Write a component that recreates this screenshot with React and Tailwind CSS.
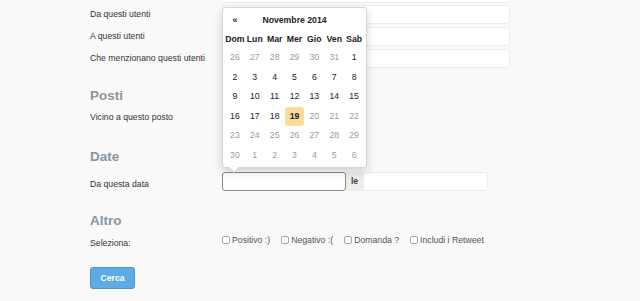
import React from "react";

const weeks = [
  [26, 27, 28, 29, 30, 31, 1],
  [2, 3, 4, 5, 6, 7, 8],
  [9, 10, 11, 12, 13, 14, 15],
  [16, 17, 18, 19, 20, 21, 22],
  [23, 24, 25, 26, 27, 28, 29],
  [30, 1, 2, 3, 4, 5, 6],
];

function Calendar() {
  return (
    <div className="absolute left-[222px] top-[7px] w-[145px] bg-white border border-[#d6d6d6] rounded-[3px] shadow-[0_4px_10px_rgba(0,0,0,0.16)] p-[2px] text-[8.7px]">
      <div className="grid grid-cols-7 h-[20px] items-center font-bold text-[#222]">
        <div className="text-center">«</div>
        <div className="col-span-5 text-center">Novembre 2014</div>
        <div></div>
      </div>
      <div className="grid grid-cols-7 h-[18px] items-center font-bold text-[#222]">
        {["Dom", "Lun", "Mar", "Mer", "Gio", "Ven", "Sab"].map((d) => (
          <div key={d} className="text-center">{d}</div>
        ))}
      </div>
      {weeks.map((w, wi) => (
        <div key={wi} className="grid grid-cols-7">
          {w.map((d, di) => {
            const idx = wi * 7 + di;
            const enabled = idx >= 6 && idx <= 23;
            const today = idx === 24;
            return (
              <div
                key={di}
                className={
                  today
                    ? "h-[19.5px] flex items-center justify-center bg-[#fcdc98] rounded-[3px] text-[#222] font-semibold"
                    : enabled
                    ? "h-[19.5px] flex items-center justify-center text-[#222]"
                    : "h-[19.5px] flex items-center justify-center text-[#9a9a9a]"
                }
              >
                {d}
              </div>
            );
          })}
        </div>
      ))}
      <div className="absolute left-[5px] -bottom-[6px] w-0 h-0 border-l-[6px] border-r-[6px] border-t-[6px] border-l-transparent border-r-transparent border-t-[#c8c8c8]"></div>
      <div className="absolute left-[6px] -bottom-[5px] w-0 h-0 border-l-[5px] border-r-[5px] border-t-[5px] border-l-transparent border-r-transparent border-t-white"></div>
    </div>
  );
}

function Box() {
  return <span className="inline-block w-[8px] h-[8px] border border-[#a8a8a8] rounded-[2px] bg-white"></span>;
}

function Check({ label }) {
  return (
    <span className="flex items-center gap-[2px] text-[#555]">
      <Box />
      <span>{label}</span>
    </span>
  );
}

export default function App() {
  const input = "w-[288px] h-full bg-white border border-[#ececec] rounded-[3px]";
  return (
    <div className="w-[640px] h-[301px] bg-[#f9f9f9] relative overflow-hidden font-['Liberation_Sans',Arial,sans-serif] text-[8.7px] leading-none text-[#333]">
      <div className="pl-[90px]">
        <div className="ml-[132px] w-[288px] h-[3px] bg-white border-b border-[#ececec] rounded-b-[3px]"></div>
        <div className="flex flex-col gap-[3px] mt-[2px]">
          <div className="flex items-center h-[19px]">
            <div className="w-[132px]">Da questi utenti</div>
            <div className={input}></div>
          </div>
          <div className="flex items-center h-[19px]">
            <div className="w-[132px]">A questi utenti</div>
            <div className={input}></div>
          </div>
          <div className="flex items-center h-[19px]">
            <div className="w-[132px]">Che menzionano questi utenti</div>
            <div className={input}></div>
          </div>
        </div>

        <div className="mt-[20px] h-[16px] flex items-center text-[13.5px] font-bold text-[#8c959d]">Posti</div>
        <div className="mt-[4px] h-[19px] flex items-center">Vicino a questo posto</div>

        <div className="mt-[22px] h-[16px] flex items-center text-[13.5px] font-bold text-[#8c959d]">Date</div>
        <div className="mt-[7px] h-[19px] flex items-stretch">
          <div className="w-[132px] pt-[8px]">Da questa data</div>
          <div className="w-[124px] bg-white border border-[#8a8a8a] rounded-[3px]"></div>
          <div className="w-[17px] bg-[#ededed] flex items-center justify-center font-semibold text-[#444]">le</div>
          <div className="w-[125px] bg-white border border-[#ececec] rounded-r-[3px]"></div>
        </div>

        <div className="mt-[22px] h-[16px] flex items-center text-[13.5px] font-bold text-[#8c959d]">Altro</div>
        <div className="mt-[4px] h-[14px] flex items-center">
          <div className="w-[132px] pt-[6px]">Seleziona:</div>
          <div className="flex items-center gap-[11px]">
            <Check label="Positivo :)" />
            <Check label="Negativo :(" />
            <Check label="Domanda ?" />
            <Check label="Includi i Retweet" />
          </div>
        </div>

        <div className="mt-[20px]">
          <button className="w-[45px] h-[22px] bg-[#5eaae4] border border-[#4b95cf] rounded-[3px] text-white font-bold text-[8.7px]">
            Cerca
          </button>
        </div>
      </div>
      <Calendar />
    </div>
  );
}
